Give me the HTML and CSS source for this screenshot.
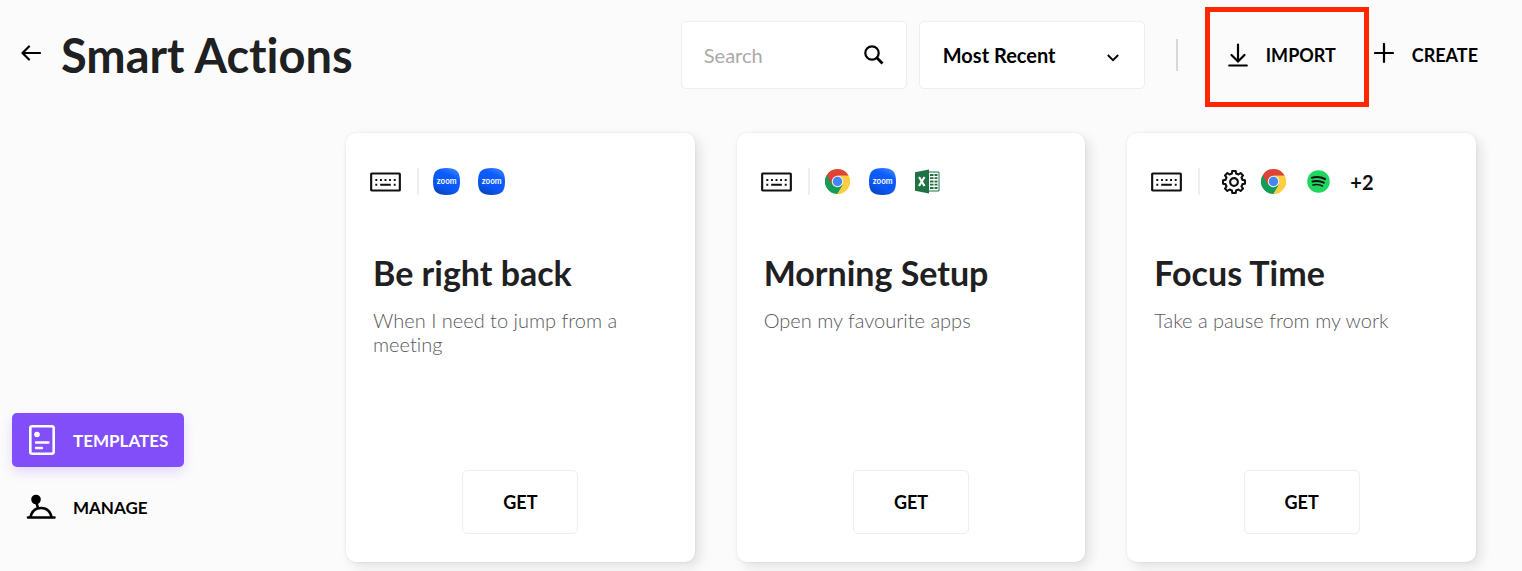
FILE: index.html
```
<!DOCTYPE html>
<html lang="en">

<head>
    <meta charset="utf-8">
    <title>Smart Actions</title>
    <link rel="stylesheet" href="styles.css">
</head>

<body>

    <!-- shared icons -->
    <svg class="sprite" aria-hidden="true">
        <defs>
            <linearGradient id="zoomBlue" x1="0.8" y1="0" x2="0.3" y2="1">
                <stop offset="0" stop-color="#3c82ff" />
                <stop offset="0.3" stop-color="#0b5cff" />
                <stop offset="0.7" stop-color="#0b57f5" />
                <stop offset="1" stop-color="#0845bd" />
            </linearGradient>
            <symbol id="keyboard" viewBox="0 0 32 20">
                <rect x="1.2" y="1.2" width="29.6" height="17.6" rx="0.6" fill="none" stroke="#111" stroke-width="2.2" />
                <path d="M5.5 8h2M10.3 8h2M15 8h2M19.7 8h2M24.5 8h2M5.5 12.8h2M10.5 12.8h11M24.5 12.8h2" stroke="#111" stroke-width="2" />
            </symbol>
            <symbol id="zoom" viewBox="0 0 27 27">
                <path d="M13.5 0C23.5 0 27 3.5 27 13.5S23.5 27 13.5 27 0 23.5 0 13.5 3.5 0 13.5 0z" fill="url(#zoomBlue)" />
                <text x="13.5" y="15.6" text-anchor="middle" font-family="Inter, sans-serif" font-size="7.6" font-weight="600" fill="#fff">zoom</text>
            </symbol>
            <symbol id="chrome" viewBox="0 0 48 48">
                <circle cx="24" cy="24" r="24" fill="#ffcd40" />
                <path d="M24 24L3.2 12A24 24 0 0 0 24 48l10.4-18z" fill="#0f9d58" />
                <path d="M24 24v-11h21.3A24 24 0 0 0 3.2 12l10.4 18z" fill="#db4437" />
                <path d="M24 13h21.3A24 24 0 0 1 24 48l10.4-18z" fill="#ffcd40" />
                <circle cx="24" cy="24" r="11" fill="#f1f1f1" />
                <circle cx="24" cy="24" r="9" fill="#4285f4" />
            </symbol>
        </defs>
    </svg>

    <header class="topbar">
        <button class="back" aria-label="Back">
            <svg width="20" height="16" viewBox="0 0 20 16" fill="none" stroke="#000" stroke-width="2.2" stroke-linecap="round" stroke-linejoin="round">
                <path d="M19 8H2M8 1.5L1.5 8 8 14.5" />
            </svg>
        </button>
        <h1>Smart Actions</h1>

        <div class="tools">
            <label class="field search">
                <input type="search" placeholder="Search" aria-label="Search">
                <svg width="20" height="20" viewBox="0 0 20 20" fill="none" stroke="#000">
                    <circle cx="8" cy="8" r="6.7" stroke-width="2.2" />
                    <path d="M12.8 12.8L18.5 18.5" stroke-width="2.8" />
                </svg>
            </label>
            <div class="field sort">
                <select aria-label="Sort by">
                    <option>Most Recent</option>
                    <option>Name</option>
                </select>
                <svg class="chevron" width="12" height="8" viewBox="0 0 12 8" fill="none" stroke="#000" stroke-width="1.8">
                    <path d="M0.8 1l5.2 5.2L11.2 1" />
                </svg>
            </div>
            <span class="divider"></span>
            <div class="highlight">
                <button class="action">
                    <svg width="20" height="24" viewBox="0 0 20 24" fill="none" stroke="#000" stroke-width="2.2" stroke-linecap="round">
                        <path d="M10 1.5V18M3.5 12l6.5 6.5 6.5-6.5M1.2 22.5h17.6" />
                    </svg>
                    IMPORT
                </button>
            </div>
            <button class="action create">
                <svg width="20" height="24" viewBox="0 0 20 24" fill="none" stroke="#000" stroke-width="2.2" stroke-linecap="round">
                    <path d="M10 1v18M1 10h18" />
                </svg>
                CREATE
            </button>
        </div>
    </header>

    <div class="content">
        <nav class="sidebar">
            <a class="nav-link active" href="#templates">
                <svg width="30" height="30" viewBox="0 0 30 30" fill="none" stroke="#fff" stroke-width="2.6" stroke-linecap="round">
                    <rect x="4.3" y="1.3" width="23.4" height="27.4" rx="2" />
                    <circle cx="11" cy="9.5" r="2.8" fill="#fff" stroke="none" />
                    <path d="M10 17.5h12.5M10 23h6" stroke-width="2.4" />
                </svg>
                TEMPLATES
            </a>
            <a class="nav-link" href="#manage">
                <svg width="30" height="30" viewBox="0 0 30 30" fill="none" stroke="#000" stroke-width="2.6" stroke-linecap="round">
                    <circle cx="10" cy="7.5" r="4.8" fill="#000" stroke="none" />
                    <path d="M10.5 11l1.5 5M4.5 25C6 18.5 10.5 16 15 16s9 2.5 10.5 9M2 25.5h26.5" />
                </svg>
                MANAGE
            </a>
        </nav>

        <main class="cards">
            <article class="card">
                <div class="apps">
                    <svg class="trigger"><use href="#keyboard" /></svg>
                    <svg class="app"><use href="#zoom" /></svg>
                    <svg class="app"><use href="#zoom" /></svg>
                </div>
                <h2>Be right back</h2>
                <p>When I need to jump from a meeting</p>
                <button class="get">GET</button>
            </article>

            <article class="card">
                <div class="apps">
                    <svg class="trigger"><use href="#keyboard" /></svg>
                    <svg class="app" viewBox="-1 -1 27 27"><use href="#chrome" width="25" height="25" /></svg>
                    <svg class="app"><use href="#zoom" /></svg>
                    <svg class="app" viewBox="0 0 27 27">
                        <path d="M14 4h11v19H14z" fill="#fff" stroke="#207245" stroke-width="1" />
                        <path d="M16 7h3.5M16 10.2h3.5M16 13.5h3.5M16 16.7h3.5M16 20h3.5M20.5 7h3M20.5 10.2h3M20.5 13.5h3M20.5 16.7h3M20.5 20h3" stroke="#207245" stroke-width="1.8" />
                        <path d="M1 4.2L15 1.5v24L1 22.8z" fill="#207245" />
                        <path d="M5 9l5.5 9M10.5 9L5 18" stroke="#fff" stroke-width="2.2" />
                    </svg>
                </div>
                <h2>Morning Setup</h2>
                <p>Open my favourite apps</p>
                <button class="get">GET</button>
            </article>

            <article class="card">
                <div class="apps">
                    <svg class="trigger"><use href="#keyboard" /></svg>
                    <svg class="gear" viewBox="-12 -12 24 24" fill="none" stroke="#111" stroke-width="2.1" stroke-linejoin="round">
                        <path d="M8.5-2.1L11-1.7V1.7L8.5 2.1 7.5 4.5 9 6.6 6.6 9 4.5 7.5 2.1 8.5 1.7 11H-1.7L-2.1 8.5-4.5 7.5-6.6 9-9 6.6-7.5 4.5-8.5 2.1-11 1.7V-1.7L-8.5-2.1-7.5-4.5-9-6.6-6.6-9-4.5-7.5-2.1-8.5-1.7-11H1.7L2.1-8.5 4.5-7.5 6.6-9 9-6.6 7.5-4.5z" />
                        <circle r="3.9" />
                    </svg>
                    <svg class="app" viewBox="-1 -1 27 27"><use href="#chrome" width="25" height="25" /></svg>
                    <svg class="app" viewBox="0 0 27 27" fill="none" stroke="#111" stroke-linecap="round">
                        <circle cx="13.5" cy="13.5" r="11.3" fill="#1ed760" stroke="none" />
                        <path d="M7 9.7c4.5-1.2 9-.8 13 1.3" stroke-width="2.2" />
                        <path d="M7.5 13.5c4-1 7.8-.6 11.3 1.2" stroke-width="1.9" />
                        <path d="M8 17c3.3-.8 6.5-.5 9.5 1" stroke-width="1.6" />
                    </svg>
                    <span class="more">+2</span>
                </div>
                <h2>Focus Time</h2>
                <p>Take a pause from my work</p>
                <button class="get">GET</button>
            </article>
        </main>
    </div>

</body>

</html>
```
FILE: styles.css
```
* {
    box-sizing: border-box;
}

body {
    margin: 0;
    min-height: 100vh;
    background-color: #fbfbfb;
    color: #1e2021;
    font-family: Lato, sans-serif;
    font-variant-ligatures: none;
}

h1,
h2,
p {
    margin: 0;
}

button,
input,
select {
    font-family: inherit;
    color: #000;
}

button {
    padding: 0;
    border: none;
    background: none;
    cursor: pointer;
}

svg {
    display: block;
    flex: none;
}

.sprite {
    position: absolute;
    width: 0;
    height: 0;
}

/* top bar */
.topbar {
    display: flex;
    align-items: center;
    padding: 7px 44px 0 21px;
}

.back {
    margin: 0 20px 8px 0;
}

h1 {
    margin-bottom: 4px;
    font-size: 47px;
    line-height: 52px;
    font-weight: 700;
    white-space: nowrap;
}

.tools {
    display: flex;
    align-items: center;
    margin-left: auto;
}

.field {
    position: relative;
    display: flex;
    align-items: center;
    width: 226px;
    height: 68px;
    margin: 0 12px 4px 0;
    border: 1px solid #eee;
    border-radius: 5px;
    background-color: white;
}

.search {
    padding: 0 22px;
}

.search input {
    flex: 1;
    min-width: 0;
    padding: 0;
    border: none;
    outline: none;
    background: none;
    font-size: 20px;
}

.search input::placeholder {
    color: #aaa;
}

.sort {
    margin-right: 31px;
}

.sort select {
    width: 100%;
    height: 100%;
    padding: 0 48px 0 23px;
    border: none;
    background: none;
    appearance: none;
    font-size: 20px;
    font-weight: 700;
}

.chevron {
    position: absolute;
    right: 25px;
    top: 32px;
    pointer-events: none;
}

.divider {
    width: 2px;
    height: 32px;
    margin: 0 27px 4px 0;
    background-color: #d8d8d8;
}

.highlight {
    display: flex;
    align-items: center;
    width: 164px;
    height: 100px;
    margin-right: 5px;
    padding: 0 0 4px 18px;
    border: 5px solid #ff2600;
}

.action {
    display: flex;
    align-items: center;
    gap: 18px;
    font-size: 18px;
    line-height: 24px;
    font-weight: 700;
}

.create {
    margin-bottom: 4px;
}

/* page content */
.content {
    display: flex;
    padding: 26px 46px 8px 12px;
}

.sidebar {
    display: flex;
    flex-direction: column;
    justify-content: flex-end;
    gap: 13px;
    width: 172px;
    margin: 0 162px 28px 0;
    flex: none;
}

.nav-link {
    display: flex;
    align-items: center;
    gap: 17px;
    height: 54px;
    padding-left: 14px;
    border-radius: 5px;
    color: #000;
    font-size: 17px;
    font-weight: 700;
    text-decoration: none;
}

.nav-link.active {
    background-color: #814efa;
    color: white;
    box-shadow: 0 5px 12px rgba(129, 78, 250, 0.2);
}

.cards {
    display: grid;
    grid-template-columns: repeat(3, 1fr);
    gap: 42px;
    flex: 1;
}

.card {
    display: flex;
    flex-direction: column;
    min-height: 429px;
    padding: 35px 27px 28px;
    border-radius: 10px;
    background-color: white;
    box-shadow: 5px 5px 12px rgba(0, 0, 0, 0.1), 0 0 3px rgba(0, 0, 0, 0.08);
}

/* keyboard trigger, thin rule, then the apps */
.apps {
    display: flex;
    align-items: center;
    height: 27px;
    margin-left: -3px;
}

.apps::before {
    content: "";
    width: 2px;
    height: 27px;
    background-color: #eee;
}

.trigger {
    order: -1;
    width: 31px;
    height: 20px;
    margin-right: 16px;
}

.trigger + svg {
    margin-left: 14px;
}

.app {
    width: 27px;
    height: 27px;
    margin-right: 18px;
}

.gear {
    width: 24px;
    height: 24px;
    margin-right: 14px;
}

.trigger + .gear {
    margin-left: 22px;
}

.more {
    color: #111;
    font-size: 20px;
    font-weight: 700;
}

h2 {
    margin-top: 58px;
    font-size: 34px;
    line-height: 40px;
    font-weight: 700;
}

.card p {
    margin-top: 15px;
    color: #58595a;
    font-size: 20px;
    line-height: 24px;
    font-weight: 300;
}

.get {
    align-self: center;
    width: 116px;
    height: 64px;
    margin-top: auto;
    border: 1px solid #eee;
    border-radius: 5px;
    font-size: 18px;
    font-weight: 700;
}
```
